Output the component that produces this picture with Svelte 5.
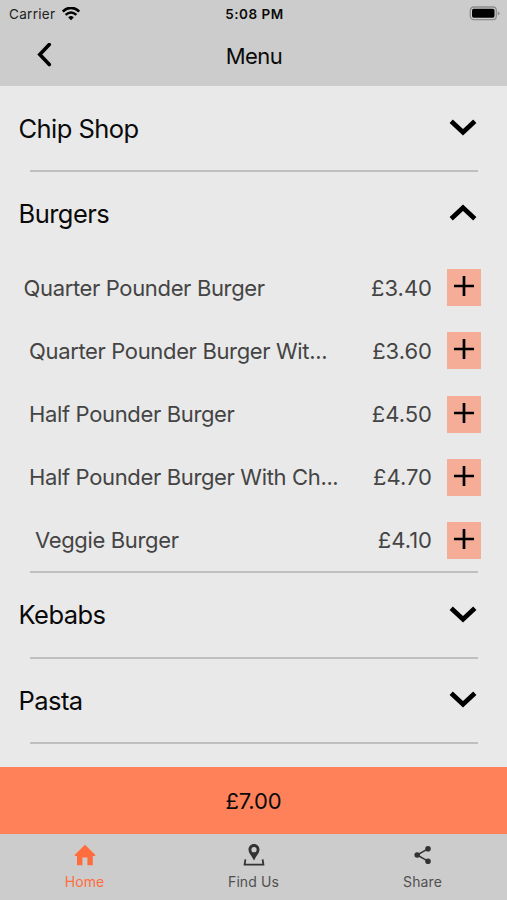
<script>
    let total = "£7.00";

    let categories = [
        { name: "Chip Shop", open: false, items: [] },
        {
            name: "Burgers",
            open: true,
            items: [
                { name: "Quarter Pounder Burger", price: "£3.40", size: "wide" },
                { name: "Quarter Pounder Burger Wit...", price: "£3.60", size: "" },
                { name: "Half Pounder Burger", price: "£4.50", size: "" },
                { name: "Half Pounder Burger With Ch...", price: "£4.70", size: "" },
                { name: "Veggie Burger", price: "£4.10", size: "narrow" },
            ],
        },
        { name: "Kebabs", open: false, items: [] },
        { name: "Pasta", open: false, items: [] },
    ];

    function toggle(category) {
        category.open = !category.open;
        categories = categories;
    }
</script>

<div class="screen">
    <header>
        <div class="status">
            <div class="carrier">
                <span>Carrier</span>
                <svg width="18" height="14" viewBox="0 0 18 14">
                    <path d="M.7 4.6Q9-3 17.3 4.6" fill="none" stroke="#000" stroke-width="2.6" />
                    <path d="M3.6 7.9Q9 3.2 14.4 7.9" fill="none" stroke="#000" stroke-width="2.5" />
                    <path d="M6.2 10.4Q9 7.8 11.8 10.4L9 13.3Z" />
                </svg>
            </div>
            <div class="time">5:08 PM</div>
            <svg class="battery" width="31" height="15" viewBox="0 0 31 15">
                <rect x="1.3" y="1" width="26" height="12.6" rx="3.4" fill="none" stroke="#8c8c8c" stroke-width="1.3" />
                <rect x="3" y="2.8" width="22.5" height="9" rx="1.8" />
                <path d="M28.8 5.2Q30.6 6 30.6 7.3T28.8 9.4Z" fill="#8c8c8c" />
            </svg>
        </div>
        <div class="title-bar">
            <svg width="16" height="26" viewBox="0 0 16 26">
                <path d="M13.3 1.5L3.8 11.5L13.3 21.5" fill="none" stroke="#000" stroke-width="3.6" stroke-linecap="round" />
            </svg>
            <h1>Menu</h1>
        </div>
    </header>

    <main>
        {#each categories as category}
            <section>
                <div class="category" on:click={() => toggle(category)} role="presentation">
                    <h2>{category.name}</h2>
                    <svg class:up={category.open} width="28" height="18" viewBox="0 0 28 18">
                        <path d="M2.2 2.2L14 13.2L25.8 2.2" fill="none" stroke="#000" stroke-width="4.7" />
                    </svg>
                </div>
                {#if category.open}
                    <div class="items">
                        {#each category.items as item}
                            <div class="item {item.size}">
                                <span class="name">{item.name}</span>
                                <span class="price">{item.price}</span>
                                <button aria-label="Add">
                                    <svg width="20" height="20" viewBox="0 0 20 20">
                                        <path d="M10 0V20M0 10H20" stroke="#000" stroke-width="2.7" />
                                    </svg>
                                </button>
                            </div>
                        {/each}
                    </div>
                {/if}
                <hr />
            </section>
        {/each}
    </main>

    <div class="total">{total}</div>

    <nav>
        <div class="tab active">
            <svg width="22" height="22" viewBox="0 0 22 22">
                <path d="M11 .8L.8 10.8V12H3V21.2H8.4V13.6H13.4V21.2H18.8V12H21.2V10.8Z" fill="currentColor" />
            </svg>
            <span>Home</span>
        </div>
        <div class="tab">
            <svg width="22" height="22" viewBox="0 0 22 22">
                <path fill-rule="evenodd" d="M11 0C7.7 0 5.5 2.5 5.5 5.6C5.5 9.2 9 12.4 11 16.6C13 12.4 16.5 9.2 16.5 5.6C16.5 2.5 14.3 0 11 0ZM11 3.1A2.6 2.6 0 1 1 11 8.3A2.6 2.6 0 1 1 11 3.1Z" fill="#333" />
                <path d="M2.4 15.4L1.6 20.6H20.4L19.6 15.4" fill="none" stroke="#333" stroke-width="1.8" />
            </svg>
            <span>Find Us</span>
        </div>
        <div class="tab">
            <svg width="22" height="22" viewBox="0 0 22 22">
                <path d="M16 4.8L5 11L16 17.2" fill="none" stroke="#333" stroke-width="1.5" />
                <circle cx="16" cy="4.8" r="2.8" fill="#333" />
                <circle cx="5.2" cy="11" r="2.8" fill="#333" />
                <circle cx="16" cy="17.2" r="2.8" fill="#333" />
            </svg>
            <span>Share</span>
        </div>
    </nav>
</div>

<style>
    :global(body) {
        margin: 0;
        background: #e9e9e9;
    }

    .screen {
        width: 507px;
        height: 900px;
        display: flex;
        flex-direction: column;
        overflow: hidden;
        background: #e9e9e9;
        color: #0a0a0a;
        font-family: Inter, "Liberation Sans", sans-serif;
    }

    svg {
        display: block;
        flex: none;
    }

    header {
        height: 86px;
        flex: none;
        background: #ccc;
    }

    .status {
        display: grid;
        grid-template-columns: 1fr auto 1fr;
        align-items: center;
        height: 27px;
        padding: 0 7px 0 9px;
        font-size: 13.5px;
    }

    .carrier {
        display: flex;
        align-items: center;
        gap: 6px;
        color: #222;
        letter-spacing: 0.3px;
    }

    .carrier span {
        width: 47px;
    }

    .time {
        font-weight: 600;
        letter-spacing: 0.5px;
    }

    .battery {
        justify-self: end;
    }

    .title-bar {
        display: grid;
        grid-template-columns: 1fr auto 1fr;
        align-items: center;
        height: 58px;
        padding: 0 35px 0 36px;
    }

    h1,
    h2 {
        margin: 0;
        font-weight: 400;
    }

    h1 {
        font-size: 22px;
        letter-spacing: -0.5px;
    }

    main {
        flex: 1;
        overflow: hidden;
    }

    .category {
        display: flex;
        align-items: center;
        justify-content: space-between;
        height: 83.3px;
        padding: 0 30px 0 18.5px;
    }

    h2 {
        font-size: 25.5px;
        letter-spacing: -0.55px;
    }

    section:first-child .category {
        height: 84px;
    }

    .category .up {
        transform: rotate(180deg);
        margin-bottom: 4px;
    }

    hr {
        height: 2px;
        margin: 0 29px 0 30px;
        border: 0;
        background: #bfbfbf;
    }

    .items {
        box-sizing: border-box;
        height: 316px;
        padding-top: 1px;
    }

    .item {
        display: flex;
        align-items: center;
        height: 63.1px;
        padding: 0 26px 0 29px;
        color: #444;
        font-size: 22px;
    }

    .item.wide {
        padding-left: 23.5px;
    }

    .item.narrow {
        padding-left: 35px;
    }

    .name {
        flex: 1;
        white-space: nowrap;
        letter-spacing: -0.35px;
    }

    .price {
        margin-right: 15px;
    }

    button {
        display: flex;
        justify-content: center;
        width: 34px;
        height: 37px;
        padding: 7px 0 0;
        border: 0;
        background: #f5ad98;
    }

    .total {
        display: flex;
        align-items: center;
        justify-content: center;
        height: 67px;
        flex: none;
        background: #ff815a;
        font-size: 22px;
        letter-spacing: -0.1px;
    }

    nav {
        display: grid;
        grid-template-columns: repeat(3, 1fr);
        height: 66px;
        flex: none;
        background: #ccc;
    }

    .tab {
        display: flex;
        flex-direction: column;
        align-items: center;
        padding-top: 10px;
        gap: 7px;
        color: #505050;
        font-size: 14px;
        line-height: 18px;
        letter-spacing: 0.1px;
    }

    .tab.active {
        color: #ff6c3e;
    }
</style>
